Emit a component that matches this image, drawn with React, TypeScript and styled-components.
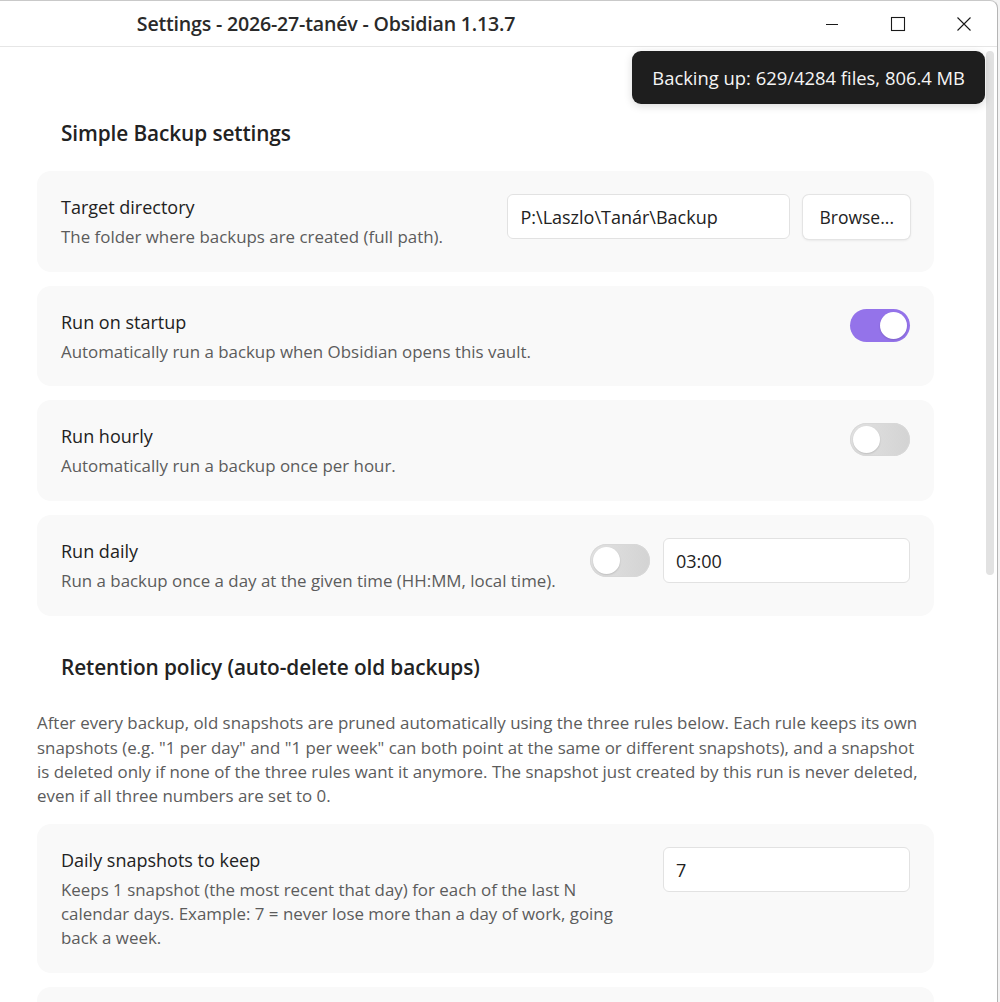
import React from 'react';
import styled, { createGlobalStyle } from 'styled-components';

const GlobalStyle = createGlobalStyle`
    html, body {
        margin: 0;
        padding: 0;
        background: #f3f3f3;
    }
    body {
        font-family: 'Open Sans', 'Noto Sans', sans-serif;
        color: #222222;
    }
    * {
        box-sizing: border-box;
    }
`;

const Window = styled.div`
    width: 998px;
    height: 1002px;
    display: flex;
    flex-direction: column;
    background: #ffffff;
    border-top: 1px solid #c9c9c9;
    border-right: 1px solid #b5b5b5;
    border-top-right-radius: 8px;
    overflow: hidden;
    position: relative;
`;

const TitleBar = styled.div`
    height: 46px;
    flex: none;
    display: flex;
    align-items: center;
    border-bottom: 1px solid #e6e6e6;
`;

const TitleText = styled.div`
    width: 652px;
    text-align: center;
    font-size: 19.6px;
    font-weight: 600;
    color: #2a2a2a;
    letter-spacing: -0.2px;
`;

const WindowControls = styled.div`
    flex: 1;
    display: flex;
    justify-content: flex-end;
    height: 100%;
`;

const ControlButton = styled.div`
    width: 66px;
    height: 100%;
    display: flex;
    align-items: center;
    justify-content: center;
    color: #1a1a1a;
`;

const Body = styled.div`
    flex: 1;
    display: flex;
    min-height: 0;
`;

const Main = styled.div`
    flex: 1;
    padding: 0 0 0 37px;
    overflow: hidden;
`;

const Content = styled.div`
    width: 897px;
    display: flex;
    flex-direction: column;
`;

const ScrollTrack = styled.div`
    width: 14px;
    flex: none;
    padding: 4px 3px 0 3px;
`;

const ScrollThumb = styled.div`
    width: 8px;
    height: 524px;
    border-radius: 4px;
    background: #e2e2e2;
`;

const SectionHeading = styled.h2<{ $top: number; $bottom: number }>`
    margin: ${(p) => p.$top}px 0 ${(p) => p.$bottom}px 24px;
    font-size: 20.8px;
    line-height: 28px;
    font-weight: 600;
    color: #222222;
    letter-spacing: -0.1px;
`;

const Paragraph = styled.p`
    margin: 0 0 16px 0;
    font-size: 16.9px;
    line-height: 24.3px;
    color: #5c5c5c;
    padding-right: 8px;
`;

const Card = styled.div`
    background: #f9f9f9;
    border-radius: 14px;
    padding: 24px 24px 22.5px 24px;
    display: flex;
    justify-content: space-between;
    align-items: flex-start;
    margin-bottom: 14.2px;
`;

const Info = styled.div<{ $max?: number }>`
    display: flex;
    flex-direction: column;
    gap: 6px;
    max-width: ${(p) => (p.$max ? `${p.$max}px` : 'none')};
`;

const Name = styled.div`
    font-size: 18px;
    line-height: 24px;
    color: #222222;
`;

const Desc = styled.div`
    font-size: 16.9px;
    line-height: 24px;
    color: #5c5c5c;
`;

const Controls = styled.div`
    display: flex;
    align-items: center;
    gap: 13px;
    margin-top: -1px;
`;

const TextInput = styled.div<{ $width: number }>`
    width: ${(p) => p.$width}px;
    height: 45px;
    background: #ffffff;
    border: 1px solid #e2e2e2;
    border-radius: 6px;
    padding: 0 12px;
    display: flex;
    align-items: center;
    font-size: 18px;
    color: #222222;
`;

const Button = styled.div`
    height: 44px;
    padding: 0 16px;
    background: #ffffff;
    border-radius: 6px;
    box-shadow: 0 0 0 1px #e4e4e4, 0 1px 3px rgba(0, 0, 0, 0.12);
    display: flex;
    align-items: center;
    font-size: 17.5px;
    color: #222222;
`;

const Toggle = styled.div<{ $on: boolean }>`
    width: 60px;
    height: 33px;
    border-radius: 17px;
    padding: 3px;
    display: flex;
    justify-content: ${(p) => (p.$on ? 'flex-end' : 'flex-start')};
    align-items: center;
    background: ${(p) => (p.$on ? '#9473ea' : 'linear-gradient(90deg, #e2e2e2, #d3d3d3)')};
    box-shadow: ${(p) => (p.$on ? 'none' : 'inset 0 0 0 1px #d8d8d8')};
`;

const Knob = styled.div`
    width: 27px;
    height: 27px;
    border-radius: 50%;
    background: #ffffff;
    box-shadow: 0 1px 2px rgba(0, 0, 0, 0.15);
`;

const Toast = styled.div`
    position: absolute;
    top: 50px;
    right: 12px;
    height: 53px;
    padding: 0 20px;
    background: #1e1e1e;
    color: #f5f5f5;
    border-radius: 9px;
    display: flex;
    align-items: center;
    font-size: 18.4px;
    box-shadow: 0 2px 8px rgba(0, 0, 0, 0.15);
`;

const MinimizeIcon = () => (
    <svg width="14" height="14" viewBox="0 0 14 14">
        <line x1="1" y1="7.5" x2="13" y2="7.5" stroke="currentColor" strokeWidth="1.1" />
    </svg>
);

const MaximizeIcon = () => (
    <svg width="16" height="16" viewBox="0 0 16 16">
        <rect x="1.5" y="1.5" width="13" height="13" fill="none" stroke="currentColor" strokeWidth="1.1" />
    </svg>
);

const CloseIcon = () => (
    <svg width="16" height="16" viewBox="0 0 16 16">
        <path d="M1.5 1.5 L14.5 14.5 M14.5 1.5 L1.5 14.5" stroke="currentColor" strokeWidth="1.1" />
    </svg>
);

type SettingProps = {
    name: string;
    desc: string;
    descMax?: number;
    children?: React.ReactNode;
};

const Setting = ({ name, desc, descMax, children }: SettingProps) => (
    <Card>
        <Info $max={descMax}>
            <Name>{name}</Name>
            <Desc>{desc}</Desc>
        </Info>
        <Controls>{children}</Controls>
    </Card>
);

const SwitchControl = ({ on }: { on: boolean }) => (
    <Toggle $on={on}>
        <Knob />
    </Toggle>
);

export default function App() {
    return (
        <>
            <GlobalStyle />
            <Window>
                <TitleBar>
                    <TitleText>Settings - 2026-27-tanév - Obsidian 1.13.7</TitleText>
                    <WindowControls>
                        <ControlButton>
                            <MinimizeIcon />
                        </ControlButton>
                        <ControlButton>
                            <MaximizeIcon />
                        </ControlButton>
                        <ControlButton>
                            <CloseIcon />
                        </ControlButton>
                    </WindowControls>
                </TitleBar>
                <Body>
                    <Main>
                        <Content>
                            <SectionHeading $top={72} $bottom={24}>
                                Simple Backup settings
                            </SectionHeading>
                            <Setting name="Target directory" desc="The folder where backups are created (full path).">
                                <TextInput $width={283}>P:\Laszlo\Tanár\Backup</TextInput>
                                <Button>Browse...</Button>
                            </Setting>
                            <Setting name="Run on startup" desc="Automatically run a backup when Obsidian opens this vault.">
                                <SwitchControl on />
                            </Setting>
                            <Setting name="Run hourly" desc="Automatically run a backup once per hour.">
                                <SwitchControl on={false} />
                            </Setting>
                            <Setting
                                name="Run daily"
                                desc="Run a backup once a day at the given time (HH:MM, local time)."
                            >
                                <SwitchControl on={false} />
                                <TextInput $width={247}>03:00</TextInput>
                            </Setting>
                            <SectionHeading $top={23.5} $bottom={30}>
                                Retention policy (auto-delete old backups)
                            </SectionHeading>
                            <Paragraph>
                                After every backup, old snapshots are pruned automatically using the three rules below.
                                Each rule keeps its own snapshots (e.g. "1 per day" and "1 per week" can both point at
                                the same or different snapshots), and a snapshot is deleted only if none of the three
                                rules want it anymore. The snapshot just created by this run is never deleted, even if
                                all three numbers are set to 0.
                            </Paragraph>
                            <Setting
                                name="Daily snapshots to keep"
                                desc="Keeps 1 snapshot (the most recent that day) for each of the last N calendar days. Example: 7 = never lose more than a day of work, going back a week."
                                descMax={572}
                            >
                                <TextInput $width={247}>7</TextInput>
                            </Setting>
                            <Setting name="Weekly snapshots to keep" desc="Keeps 1 snapshot for each of the last N weeks.">
                                <TextInput $width={247}>4</TextInput>
                            </Setting>
                        </Content>
                    </Main>
                    <ScrollTrack>
                        <ScrollThumb />
                    </ScrollTrack>
                </Body>
                <Toast>Backing up: 629/4284 files, 806.4 MB</Toast>
            </Window>
        </>
    );
}
